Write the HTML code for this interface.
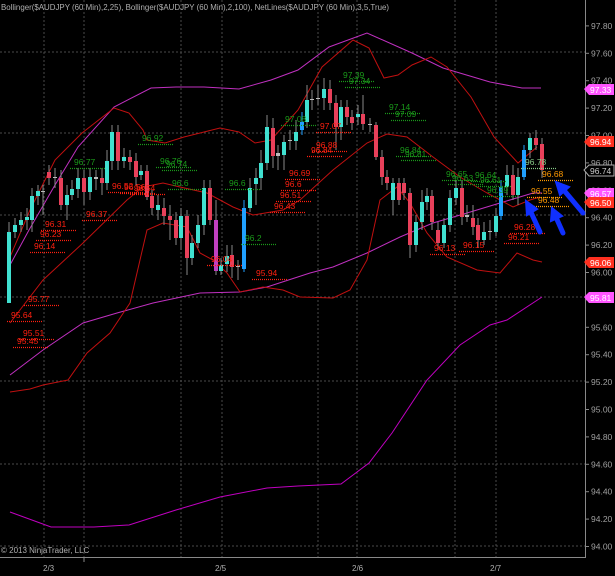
<!DOCTYPE html>
<html><head><meta charset="utf-8"><style>
html,body{margin:0;padding:0;background:#000;width:615px;height:576px;overflow:hidden}
svg{display:block;font-family:"Liberation Sans",sans-serif}
</style></head><body>
<svg id="s" width="615" height="576" viewBox="0 0 615 576" xmlns="http://www.w3.org/2000/svg">
<rect width="615" height="576" fill="#000"/>
<g stroke="#4a4a4a" stroke-width="1" stroke-dasharray="2,2">
<line x1="0" y1="52" x2="585" y2="52"/><line x1="0" y1="133" x2="585" y2="133"/><line x1="0" y1="215" x2="585" y2="215"/><line x1="0" y1="297" x2="585" y2="297"/><line x1="0" y1="381" x2="585" y2="381"/><line x1="0" y1="464" x2="585" y2="464"/><line x1="0" y1="546" x2="585" y2="546"/>
<line x1="44" y1="0" x2="44" y2="557"/><line x1="84" y1="0" x2="84" y2="557"/><line x1="181" y1="0" x2="181" y2="557"/><line x1="222" y1="0" x2="222" y2="557"/><line x1="318" y1="0" x2="318" y2="557"/><line x1="357" y1="0" x2="357" y2="557"/><line x1="455" y1="0" x2="455" y2="557"/><line x1="496" y1="0" x2="496" y2="557"/>
</g>
<line x1="585.5" y1="0" x2="585.5" y2="558" stroke="#888"/>
<line x1="0" y1="557.5" x2="586" y2="557.5" stroke="#888"/>
<line x1="84" y1="557" x2="84" y2="562" stroke="#888"/>
<g fill="none" stroke-width="1">
<path stroke="#c000c0" d="M10,512 L51,527 L94,527 L129,525 L176,510 L220,497 L267,488 L298,486 L341,484 L369,463 L392,433 L427,380 L460,345 L490,325 L507,320 L542,297"/>
<path stroke="#c030c0" d="M10,375 L43,350 L83,323 L117,313 L153,303 L200,293 L240,292 L267,287 L310,273 L333,267 L367,253 L400,237 L433,223 L467,213 L500,203 L533,193 L542,193"/>
<path stroke="#c030c0" d="M10,265 L29,230 L55,185 L78,147 L114,107 L151,88 L176,87 L204,87 L239,89 L271,80 L298,70 L329,47 L367,33 L412,53 L443,68 L490,82 L522,88 L541,88"/>
<path stroke="#c01010" d="M10,257 L30,210 L55,160 L82,133 L114,108 L129,113 L143,130 L147,140 L165,143 L184,137 L220,128 L239,132 L255,143 L271,140 L298,110 L322,67 L353,40 L369,48 L384,78 L398,75 L412,65 L431,57 L447,67 L471,97 L494,137 L518,163 L537,147"/>
<path stroke="#c01010" d="M10,323 L43,280 L83,243 L127,200 L143,187 L163,183 L180,187 L207,193 L233,207 L253,215 L283,210 L300,200 L333,170 L367,143 L387,134 L407,137 L433,157 L460,177 L487,193 L513,207 L530,200 L540,197"/>
<path stroke="#c01010" d="M10,392 L30,389 L43,385 L68,380 L87,353 L110,333 L130,303 L140,260 L147,230 L163,223 L187,227 L200,253 L213,260 L227,273 L240,292 L263,287 L283,290 L300,297 L333,298 L350,290 L367,260 L380,200 L397,187 L410,203 L427,233 L447,257 L477,270 L500,273 L517,253 L533,260 L542,262"/>
</g>
<g id="c"></g>
<g font-size="8.5" id="lab"></g>
<g fill="#b0b0b0" font-size="8">
<text x="1" y="10" textLength="388" lengthAdjust="spacingAndGlyphs">Bollinger($AUDJPY (60 Min),2,25), Bollinger($AUDJPY (60 Min),2,100), NetLines($AUDJPY (60 Min),3,5,True)</text>
<text x="1" y="553">© 2013 NinjaTrader, LLC</text>
<text x="43" y="571">2/3</text><text x="215" y="571">2/5</text><text x="352" y="571">2/6</text><text x="490" y="571">2/7</text>
</g>
<g id="ax" fill="#a0a0a0" font-size="8.5"></g>
<g stroke="#1030ff" stroke-width="5" stroke-linecap="round" fill="#1030ff">
<line x1="540" y1="232" x2="529" y2="208"/><polygon points="526,201 537,209 527,215" stroke-width="2"/>
<line x1="563" y1="233" x2="555" y2="215"/><polygon points="552,208 562,216 551,221" stroke-width="2"/>
<line x1="583" y1="213" x2="562" y2="188"/><polygon points="556,182 569,187 560,195" stroke-width="2"/>
</g>
<g font-size="8.5">
<polygon points="584,89 589,84 614,84 614,95 589,95" fill="#ff55ff"/><text x="590" y="93" fill="#fff">97.33</text>
<polygon points="584,142 589,136 614,136 614,147 589,147" fill="#ff3020"/><text x="590" y="145" fill="#fff">96.94</text>
<polygon points="584,170 589,165 614,165 614,176 589,176" fill="#000" stroke="#aaa"/><text x="590" y="174" fill="#ccc">96.74</text>
<polygon points="584,193 589,188 614,188 614,199 589,199" fill="#ff55ff"/><text x="590" y="197" fill="#fff">96.57</text>
<polygon points="584,202 589,197 614,197 614,208 589,208" fill="#ff3020"/><text x="590" y="206" fill="#fff">96.50</text>
<polygon points="584,262 589,257 614,257 614,268 589,268" fill="#ff3020"/><text x="590" y="266" fill="#fff">96.06</text>
<polygon points="584,297 589,292 614,292 614,303 589,303" fill="#ff55ff"/><text x="590" y="301" fill="#fff">95.81</text>
</g>
</svg>
<script>
var NS="http://www.w3.org/2000/svg",S=document.getElementById("c");
function el(t,a,p){var e=document.createElementNS(NS,t);for(var k in a)e.setAttribute(k,a[k]);(p||S).appendChild(e);return e;}
var C="#40e0d0",R="#e8405a",B="#20a0ff";
var d=[[9,232,303,C,222,303],[15,225,232,C,218,238],[21,220,225,C,212,232],[27,217,220,C,208,230],[32,196,220,C,188,232],[38,191,196,C,185,205],[43,191,192,"#ccc",185,215],[49,172,178,R,165,185],[55,177,178,"#ccc",168,188],[61,178,205,R,170,210],[67,195,205,C,185,220],[72,189,195,C,180,200],[78,178,189,C,168,198],[84,178,192,R,170,205],[90,177,192,C,168,200],[96,177,179,"#ccc",170,190],[102,178,183,R,168,195],[107,161,183,C,150,190],[112,132,161,C,125,170],[118,132,161,R,125,170],[124,157,161,C,148,168],[130,157,162,R,150,170],[136,161,177,R,153,185],[141,171,175,C,165,180],[147,171,197,R,165,200],[152,196,208,R,190,215],[158,205,210,C,195,220],[164,208,216,R,198,225],[170,216,220,R,205,240],[176,220,238,R,212,245],[181,216,238,C,208,250],[187,216,258,R,210,275],[192,243,258,C,235,265],[198,225,243,C,215,248],[204,188,225,C,180,235],[210,188,220,R,180,225],[216,220,271,"#c040c0",200,275],[221,265,271,C,258,275],[227,256,264,C,245,272],[232,255,267,R,245,278],[238,266,267,"#ccc",260,280],[244,208,269,B,200,272],[250,188,208,C,178,212],[256,178,184,C,168,205],[261,163,178,C,150,190],[267,127,163,C,115,170],[273,128,156,R,118,168],[278,153,156,"#ccc",145,170],[284,142,155,C,135,170],[290,140,141,"#ccc",130,150],[296,132,141,C,120,150],[302,122,130,B,112,135],[307,100,122,C,85,128],[312,99,100,"#ccc",90,110],[318,98,99,"#ccc",85,105],[324,89,98,C,78,110],[330,89,103,R,80,110],[336,103,127,R,95,150],[341,107,127,C,100,140],[347,107,117,R,100,125],[352,117,123,R,110,130],[358,114,117,C,105,125],[363,114,124,R,95,130],[370,124,125,"#ccc",118,132],[376,125,157,R,122,160],[382,157,177,R,150,185],[387,177,183,R,170,190],[393,183,200,C,178,215],[399,183,200,R,178,205],[404,183,193,R,178,200],[410,193,245,R,188,258],[416,222,245,C,215,252],[422,202,222,C,190,230],[427,196,202,C,188,210],[432,196,222,R,190,230],[438,230,243,R,222,250],[444,225,243,C,218,248],[450,198,225,C,190,232],[456,188,198,C,180,205],[462,188,217,R,180,225],[467,215,217,"#ccc",205,222],[473,218,227,R,205,235],[478,225,240,R,218,248],[484,232,240,C,222,245],[490,231,232,"#ccc",220,240],[496,216,232,C,208,236],[501,187,216,B,180,220],[507,175,187,C,165,195],[513,175,195,R,165,200],[518,177,195,C,168,205],[524,150,177,B,145,180],[530,138,150,C,133,158],[536,138,145,R,130,150],[542,144,170,R,138,178]];
d.forEach(function(c){
el("line",{x1:c[0],x2:c[0],y1:c[4],y2:c[5],stroke:c[3]==B?B:"#888","stroke-width":1});
el("rect",{x:c[0]-2,y:c[1],width:4,height:Math.max(1,c[2]-c[1]),fill:c[3]=="#ccc"?"#bbb":c[3]});});
var G="#1a9a1a",RD="#ff2010",O="#ff9a00",L=document.getElementById("lab");
var labs=[["96.77",74,165,G],["96.92",142,141,G],["96.76",160,164,G],["96.74",166,167,G],["96.6",172,186,G],["96.6",229,186,G],["96.2",245,241,G],["97.08",285,122,G],["97.39",343,78,G],["97.34",349,84,G],["97.14",389,110,G],["97.09",395,117,G],["96.84",400,153,G],["96.81",405,157,G],["96.65",446,177,G],["96.63",452,181,G],["96.64",475,178,G],["96.61",480,183,G],["96.39",487,193,G],["96.78",525,165,"#8c8"],
["96.52",112,189,RD],["96.56",124,190,RD],["96.54",134,191,RD],["96.37",86,217,RD],["96.31",45,227,RD],["96.23",40,237,RD],["96.14",34,249,RD],["95.77",28,302,RD],["95.64",11,318,RD],["95.51",23,336,RD],["95.45",17,344,RD],["96.04",211,262,RD],["95.94",256,276,RD],["96.51",280,198,RD],["96.43",274,209,RD],["96.69",289,176,RD],["96.6",285,187,RD],["96.88",316,148,RD],["96.84",311,153,RD],["97.07",320,129,RD],["96.13",434,251,RD],["96.15",463,248,RD],["96.28",514,230,RD],["96.21",508,240,RD],
["96.68",542,177,O],["96.55",531,194,O],["96.48",538,203,O]];
labs.forEach(function(l){var t=el("text",{x:l[1],y:l[2],fill:l[3]},L);t.textContent=l[0];
el("line",{x1:l[1]-4,x2:l[1]+32,y1:l[2]+3.5,y2:l[2]+3.5,stroke:l[3],"stroke-width":1.2,"stroke-dasharray":"1,1"},L);});
var A=document.getElementById("ax");
for(var i=0;i<=19;i++){var p=97.8-i*0.2,y=546-(p-94)*137+0.5;
var t=el("text",{x:591,y:y+3},A);t.textContent=p.toFixed(2);
el("line",{x1:585,x2:589,y1:y,y2:y,stroke:"#888"},A);}
</script>
</body></html>
